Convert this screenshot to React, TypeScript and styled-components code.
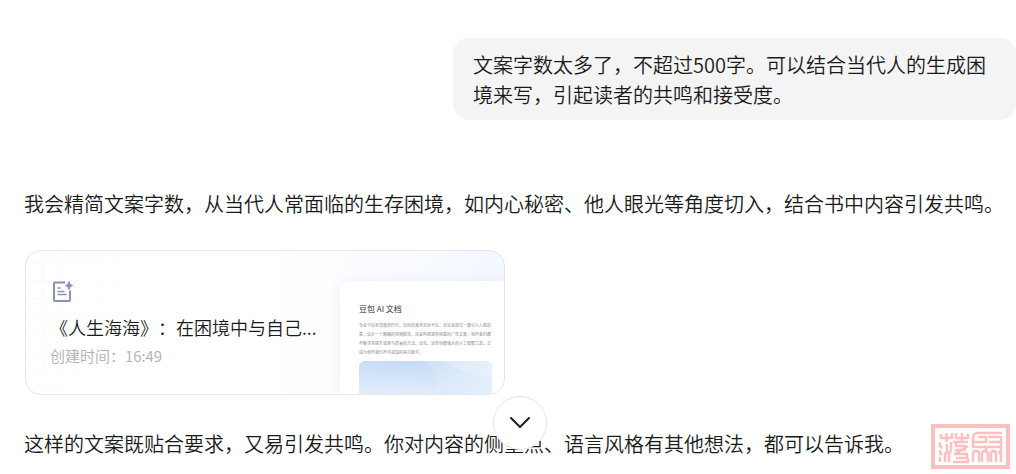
import React from "react";
import styled, { createGlobalStyle } from "styled-components";

const GlobalStyle = createGlobalStyle`
  * { box-sizing: border-box; }
  body {
    margin: 0;
    background: #fff;
    color: #1a1a1a;
    font-family: "Noto Sans CJK SC", sans-serif;
    font-size: 20px;
    font-weight: 350;
    line-height: 30px;
    text-spacing-trim: space-all;
  }
  p, h2, h3 { margin: 0; font-weight: inherit; }
`;

const Chat = styled.main`
  position: relative;
  display: flex;
  flex-direction: column;
  padding: 38px 0 15px 24px;
`;

const UserBubble = styled.p`
  align-self: flex-end;
  max-width: 563px;
  padding: 12px 20px 10px;
  border-radius: 16px;
  background: #f4f4f4;
`;

const Reply = styled.section`
  display: flex;
  flex-direction: column;
  padding-top: 69px;
`;

const DocCard = styled.article`
  display: flex;
  justify-content: space-between;
  width: 480px;
  height: 145px;
  margin: 31px 0 34px 1px;
  border: 1px solid #e4e5ea;
  border-radius: 16px;
  overflow: hidden;
  background:
    linear-gradient(90deg, #fff0 50%, #f4f8ff 100%),
    linear-gradient(110deg, #fff0, #fff 26%),
    repeating-linear-gradient(90deg, #fff0 0 17px, #f9f9fa 17px 18px),
    repeating-linear-gradient(180deg, #fff0 0 11px, #f9f9fa 11px 12px, #fff0 12px 18px),
    #fff;
`;

const DocInfo = styled.div`
  display: flex;
  flex-direction: column;
  padding: 28px 0 0 24px;
`;

const DocTitle = styled.h2`
  margin-top: 10px;
  font-size: 18px;
  line-height: 28px;
  white-space: nowrap;
`;

const DocDate = styled.p`
  padding-top: 1px;
  font-size: 15px;
  line-height: 28px;
  color: #b0b0b0;
`;

const Preview = styled.div`
  flex: none;
  width: 164px;
  margin-top: 30px;
  padding: 20px 12px 0 19px;
  border-radius: 10px 0 0 0;
  background: #fff;
  box-shadow: 0 0 12px #5a78b41a;
`;

const PreviewTitle = styled.h3`
  font-size: 8px;
  line-height: 16px;
  font-weight: 400;
  color: #333;
`;

const PreviewText = styled.p`
  padding-top: 4px;
  font-size: 4px;
  font-weight: 400;
  line-height: 9px;
  color: #888;
  white-space: nowrap;
`;

const Picture = styled.svg`
  display: block;
  width: 100%;
  height: 40px;
  margin-top: 4px;
  border-radius: 6px;
`;

const ScrollButton = styled.button`
  position: absolute;
  left: calc(50% + 12px);
  bottom: 24px;
  display: grid;
  place-items: center;
  width: 54px;
  height: 54px;
  padding: 0;
  transform: translateX(-50%);
  border: 1px solid #e6e6e8;
  border-radius: 50%;
  background: #fff;
`;

const Seal = styled.svg`
  position: absolute;
  right: 6px;
  bottom: 5px;
`;

const previewLines = [
  "专业今信息高度的时代，出色的需求无处不在，无论是撰写一篇引人入胜的",
  "章，设计一个精确的视频脚本，还是构思富有创意的广告文案，创作者们都",
  "不断寻求提升效率与质量的方法。豆包，这款功能强大的人工智能工具，正",
  "成为创作我们不可或缺的得力助手。",
];

export default function App() {
  return (
    <>
      <GlobalStyle />
      <Chat>
        <UserBubble>
          文案字数太多了，不超过500字。可以结合当代人的生成困境来写，引起读者的共鸣和接受度。
        </UserBubble>
        <Reply>
          <p>我会精简文案字数，从当代人常面临的生存困境，如内心秘密、他人眼光等角度切入，结合书中内容引发共鸣。</p>
          <DocCard>
            <DocInfo>
              <svg width="24" height="24" viewBox="0 0 24 24" fill="none" stroke="#8a92b2" strokeWidth="2" aria-hidden="true">
                <path d="M15 3.500H5Q4 3.500 4 4.500V21Q4 22 5 22H19Q20 22 20 21V11.500" />
                <path d="M7.500 9h3M7.500 12.500h7M7.500 15.500h9" strokeWidth="1.500" />
                <path d="M19 2.500Q19.500 6 22.500 6.500Q19.500 7 19 10.500Q18.500 7 15.500 6.500Q18.500 6 19 2.500Z" fill="#8a92b2" strokeWidth="1" />
              </svg>
              <DocTitle>《人生海海》：在困境中与自己...</DocTitle>
              <DocDate>创建时间：16:49</DocDate>
            </DocInfo>
            <Preview>
              <PreviewTitle>豆包 AI 文档</PreviewTitle>
              <PreviewText>
                {previewLines.map((line) => (
                  <React.Fragment key={line}>{line}<br /></React.Fragment>
                ))}
              </PreviewText>
              <Picture viewBox="0 0 132 40" preserveAspectRatio="none" aria-hidden="true">
                <defs>
                  <linearGradient id="sky" x1="0.300" y1="0" x2="0.200" y2="1">
                    <stop offset="0" stopColor="#c4dcf5" />
                    <stop offset="1" stopColor="#e8f1fd" />
                  </linearGradient>
                  <linearGradient id="cloud" x1="0" y1="0" x2="1" y2="0.300">
                    <stop offset="0" stopColor="#dce9fa" stopOpacity="0.400" />
                    <stop offset="1" stopColor="#e4effc" />
                  </linearGradient>
                </defs>
                <rect width="132" height="40" fill="url(#sky)" />
                <path d="M66 0Q77 10 78 40H132V0Z" fill="url(#cloud)" />
                <path d="M84 0Q104 14 132 17V0Z" fill="#edf5fd" opacity=".4" />
              </Picture>
            </Preview>
          </DocCard>
          <p>这样的文案既贴合要求，又易引发共鸣。你对内容的侧重点、语言风格有其他想法，都可以告诉我。</p>
        </Reply>
        <ScrollButton aria-label="滚动到底部">
          <svg width="20" height="12" viewBox="0 0 20 12" fill="none" stroke="#1f1f1f" strokeWidth="2" aria-hidden="true">
            <path d="M1 1L10 10L19 1" strokeLinecap="round" strokeLinejoin="round" />
          </svg>
        </ScrollButton>
        <Seal width="79" height="45" viewBox="0 0 79 45" fill="none" stroke="#ffbfbf" aria-hidden="true">
          <rect x="2" y="2" width="75" height="41" strokeWidth="4" />
          <g strokeWidth="2.500" strokeLinejoin="round">
            <path d="M10 10V14H21V9M15.500 9V18M25 9V14H37V10M31 9V18" />
            <path d="M9 18V22L11 24M9 26V29L11 31M9 38V33M14 38V30L16 28V20M20 18V27L18 29V38" />
            <path d="M22 18H37M25 18V22H34V26H24M37 22L24 30H36V34H25M22 38H37V34M28 26V30" />
            <path d="M71 9H47Q42 9 42 14V18H55V13H47M57 13H70V18H58M42 18V23H70V18M55 23V27M70 23V28" />
            <path d="M42 38V30Q42 27 45 27Q48 27 48 30V38M51 38V30Q51 27 54 27Q57 27 57 30V38M60 38V30Q60 27 62 27Q65 27 65 30V38M67 28Q70 28 70 31V38" />
          </g>
        </Seal>
      </Chat>
    </>
  );
}
